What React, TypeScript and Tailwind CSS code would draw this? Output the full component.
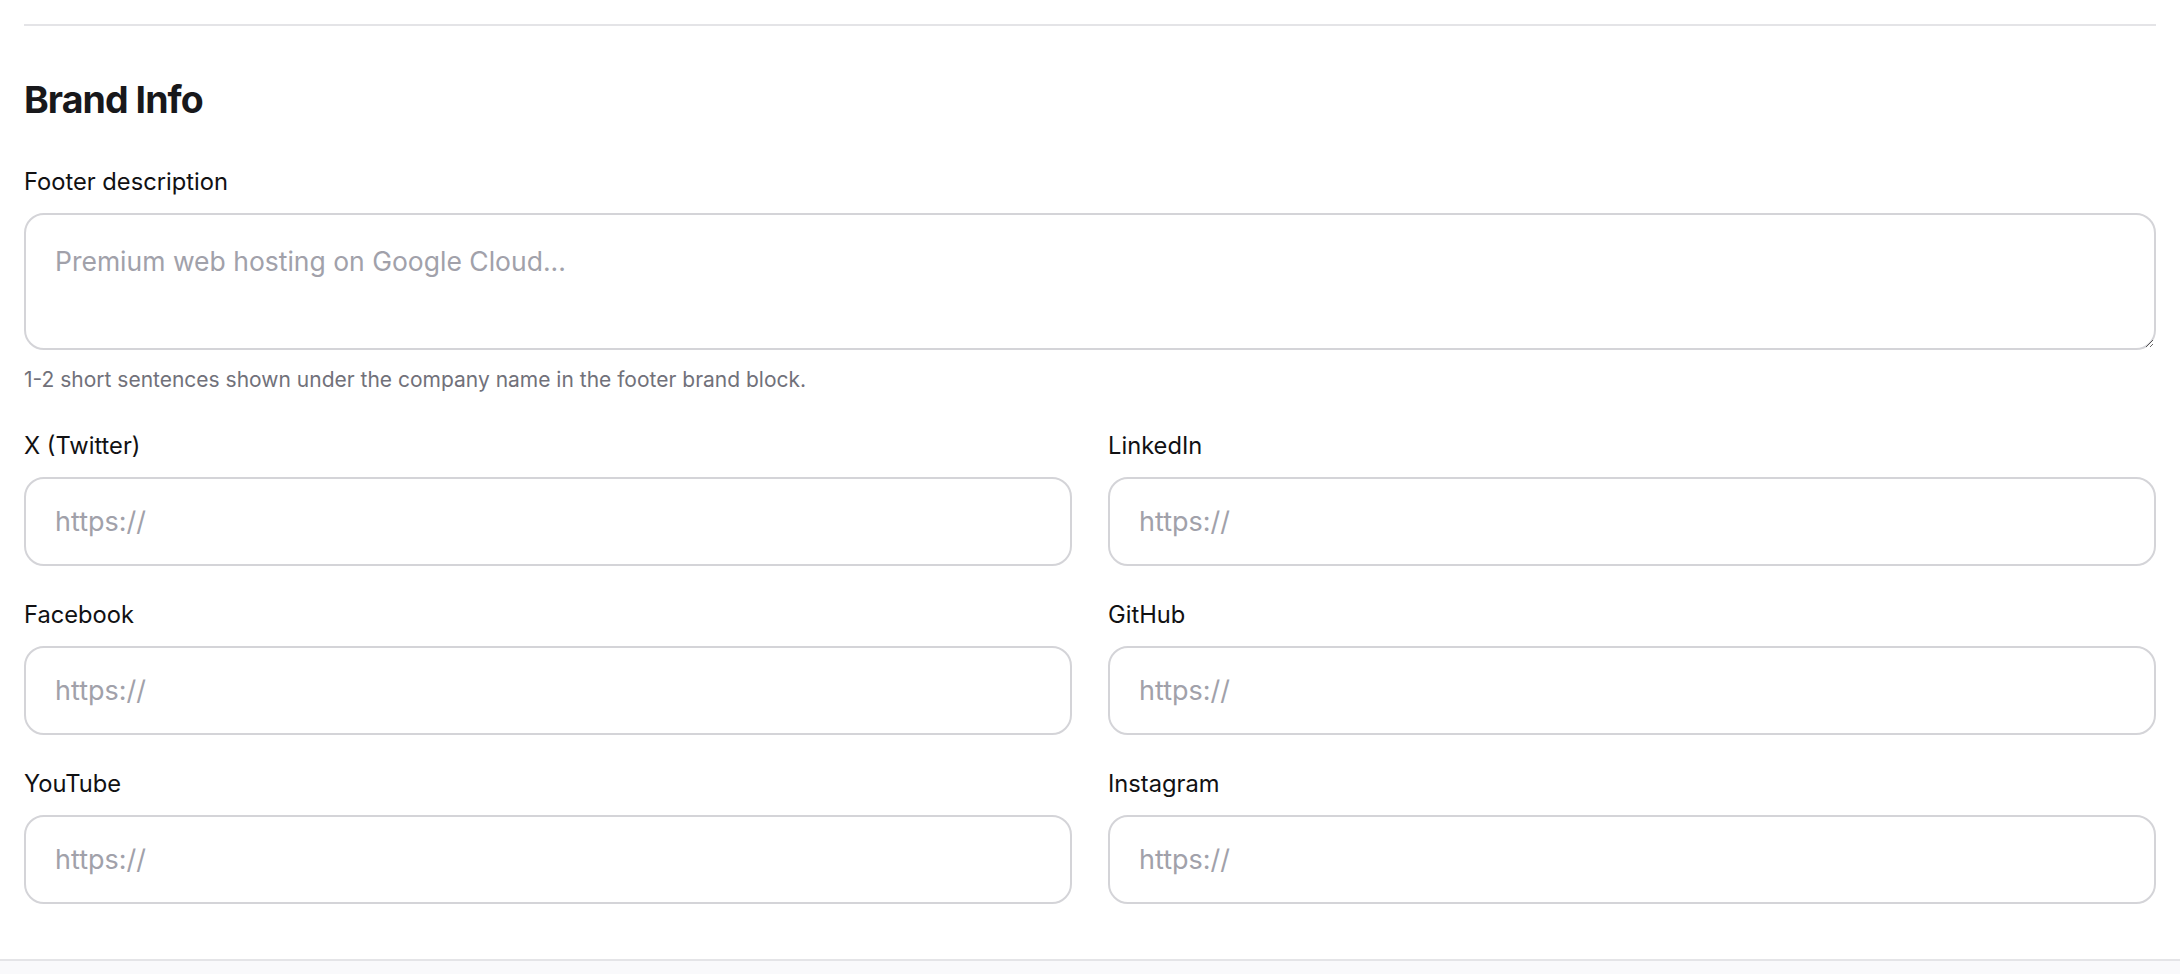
import React from 'react';

const socials = [
  ['X (Twitter)', 'LinkedIn'],
  ['Facebook', 'GitHub'],
  ['YouTube', 'Instagram'],
];

function Field({ label }: { label: string }) {
  return (
    <div className="flex flex-col gap-[16px]">
      <label className="text-[23.7px] leading-[30px] text-[#111113]">{label}</label>
      <input
        type="url"
        placeholder="https://"
        className="h-[89px] w-full rounded-[20px] border-2 border-[#d4d4d8] bg-white px-[29px] text-[27px] text-[#18181b] placeholder:text-[#a1a1aa] outline-none"
      />
    </div>
  );
}

export default function App() {
  return (
    <div className="min-h-[974px] bg-[#f9f9fb] font-['Inter',sans-serif]">
      <section className="bg-white px-6 pt-6 pb-[55px] border-b-2 border-[#e4e4e7]">
        <div className="border-t-2 border-[#e4e4e7]" />

        <h2 className="mt-[51px] text-[37.5px] leading-[45px] font-bold tracking-tight text-[#18181b]">Brand Info</h2>

        <div className="mt-[45px] flex flex-col">
          <label className="text-[23.7px] leading-[30px] text-[#111113]">Footer description</label>
          <textarea
            rows={2}
            placeholder="Premium web hosting on Google Cloud..."
            className="mt-[16px] h-[137px] w-full rounded-[20px] border-2 border-[#d4d4d8] bg-white px-[29px] pt-[26px] pb-[22px] text-[26.5px] leading-[40px] text-[#18181b] placeholder:text-[#a1a1aa] outline-none"
          />
          <p className="mt-[15px] text-[21px] leading-[30px] text-[#71717a]">
            1-2 short sentences shown under the company name in the footer brand block.
          </p>
        </div>

        <div className="mt-[36px] grid grid-cols-2 gap-x-[36px] gap-y-[34px]">
          {socials.flat().map((name) => (
            <Field key={name} label={name} />
          ))}
        </div>
      </section>
    </div>
  );
}
